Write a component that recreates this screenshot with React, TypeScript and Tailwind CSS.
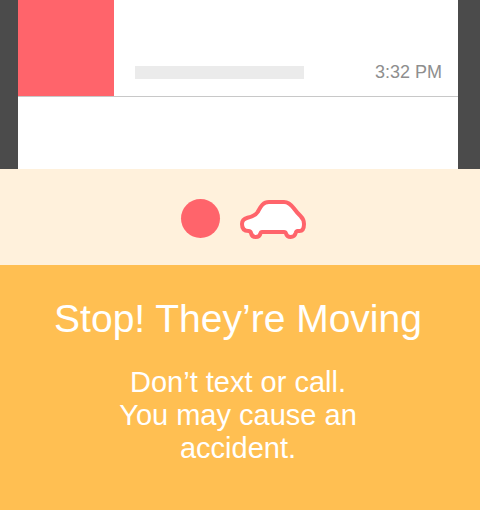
function CarIcon() {
  return (
    <svg
      width="66"
      height="40"
      viewBox="0 -1 66 40"
      fill="#ffffff"
      stroke="#ff646b"
      strokeWidth="4"
      strokeLinejoin="round"
      role="img"
      aria-label="Car"
    >
      <path d="M2 24C2 20.500 4 18.700 7.500 17.800C12 16.700 15.500 15.500 17.700 12C20.500 7 22.500 2 29 2H44C48.500 2 51 4.500 54 8.500C56.500 12 58 13.500 60.500 16C63 18.500 64 21 64 24C64 28.500 62.500 31 59.500 31H57.500C56.500 31 56 31.800 55.700 33C55 35.500 53 37 50.700 37C48 37 46.500 35.500 46 33.500C45.700 32.300 45.200 32 44 32H22C21 32 20.700 32.300 20.400 33.500C20 35.500 18 37 15.700 37C13.200 37 11.500 35.500 11 33C10.700 31.500 10 31 8.500 31C4 31 2 28.500 2 24Z" />
    </svg>
  );
}

function MessageList() {
  return (
    <section className="h-[169px] overflow-hidden bg-[#4b4b4b] pl-[18px] pr-[22px]">
      <div className="h-full bg-white">
        <div className="flex h-[97px] border-b border-[#c8c8c8]">
          <div className="w-24 bg-[#ff646b]" />
          <div className="flex flex-1 items-end justify-between pb-[14px] pl-[21px] pr-4">
            <div className="mb-[3px] h-[13px] w-[169px] bg-[#ebebeb]" />
            <time className="text-[18px] leading-5 text-[#8e8e8e]">3:32 PM</time>
          </div>
        </div>
      </div>
    </section>
  );
}

export default function App() {
  return (
    <main className="min-h-screen bg-[#ffbf52] font-['Liberation_Sans',Arial,sans-serif]">
      <MessageList />
      <section className="flex h-24 items-start justify-center gap-5 bg-[#fff1dc] pl-[6px] pt-[30px]">
        <div className="size-[39px] rounded-full bg-[#ff646b]" />
        <CarIcon />
      </section>
      <section className="pb-12 pl-4 pr-5 pt-8 text-center text-white">
        <h1 className="text-[39px] leading-[44px]">Stop! They’re Moving</h1>
        <p className="mx-auto mt-[25px] max-w-[256px] text-[29px] leading-[33px]">
          Don’t text or call. You may cause an accident.
        </p>
      </section>
    </main>
  );
}
